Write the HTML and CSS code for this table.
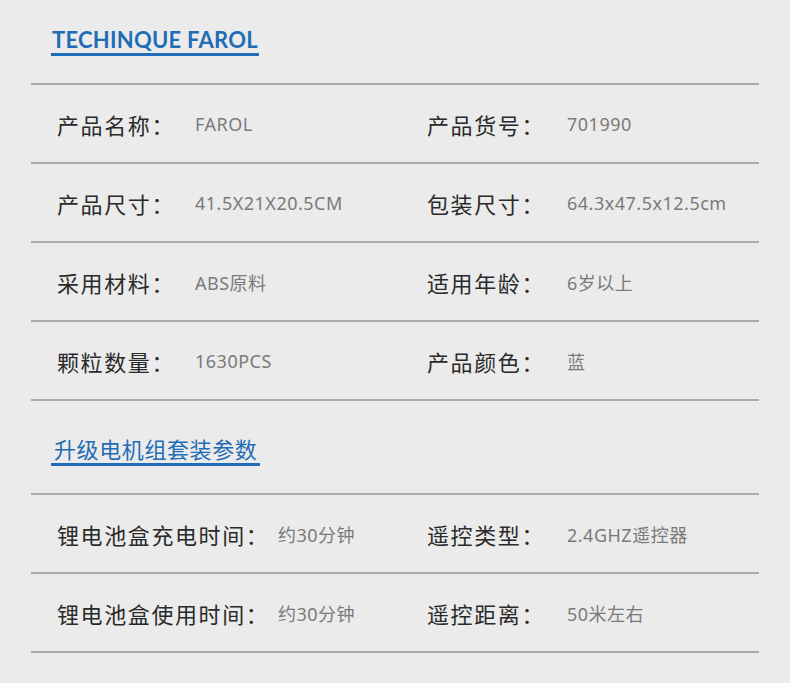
FILE: index.html
```html
<!DOCTYPE html>
<html lang="zh">
<head>
<meta charset="utf-8">
<title>TECHINQUE FAROL</title>
<link rel="stylesheet" href="styles.css">
</head>
<body>
<div class="page">
  <div class="head">
    <span class="title en">TECHINQUE FAROL</span>
  </div>
  <div class="table t1">
    <div class="row">
      <span class="label">产品名称：</span><span class="value">FAROL</span>
      <span class="label">产品货号：</span><span class="value">701990</span>
    </div>
    <div class="row">
      <span class="label">产品尺寸：</span><span class="value">41.5X21X20.5CM</span>
      <span class="label">包装尺寸：</span><span class="value">64.3x47.5x12.5cm</span>
    </div>
    <div class="row">
      <span class="label">采用材料：</span><span class="value">ABS原料</span>
      <span class="label">适用年龄：</span><span class="value">6岁以上</span>
    </div>
    <div class="row">
      <span class="label">颗粒数量：</span><span class="value">1630PCS</span>
      <span class="label">产品颜色：</span><span class="value">蓝</span>
    </div>
  </div>
  <div class="head2">
    <span class="title cn">升级电机组套装参数</span>
  </div>
  <div class="table t2">
    <div class="row">
      <span class="label">锂电池盒充电时间：</span><span class="value">约30分钟</span>
      <span class="label">遥控类型：</span><span class="value">2.4GHZ遥控器</span>
    </div>
    <div class="row">
      <span class="label">锂电池盒使用时间：</span><span class="value">约30分钟</span>
      <span class="label">遥控距离：</span><span class="value">50米左右</span>
    </div>
  </div>
</div>
</body>
</html>
```

FILE: styles.css
```css
html, body {
  margin: 0;
  padding: 0;
  background: #ebebeb;
}

.page {
  margin-left: 31px;
  width: 728px;
  height: 683px;
}

.head {
  height: 83px;
  padding-top: 29px;
  box-sizing: border-box;
}

.title {
  display: inline-block;
  color: #1f6db6;
  border-bottom: 3px solid #1f6db6;
}

.title.en {
  font-family: Lato, "Open Sans", sans-serif;
  font-weight: 700;
  font-size: 22px;
  line-height: 22px;
  margin-left: 20px;
  padding: 0 1px 2px 1px;
  letter-spacing: 0.25px;
}

.head2 {
  height: 92px;
  padding-top: 36px;
  box-sizing: border-box;
}

.title.cn {
  font-family: "Noto Sans CJK SC", sans-serif;
  font-size: 22px;
  line-height: 22px;
  letter-spacing: 0.6px;
  margin-left: 20px;
  padding: 0 3px 4px 3px;
}

.table {
  border-top: 2px solid #ababab;
}

.row {
  display: grid;
  align-items: center;
  height: 79px;
  box-sizing: border-box;
  border-bottom: 2px solid #ababab;
  padding-left: 26px;
}

.t1 .row {
  grid-template-columns: 138px 232px 140px 1fr;
}

.t2 .row {
  grid-template-columns: 221px 149px 140px 1fr;
}

.label {
  font-family: "Noto Sans CJK SC", sans-serif;
  font-size: 22px;
  letter-spacing: 1.6px;
  color: #2a2a2a;
  white-space: nowrap;
}

.value {
  font-family: "Noto Sans", "Noto Sans CJK SC", sans-serif;
  font-size: 18px;
  letter-spacing: 0.5px;
  color: #7a7a7a;
  white-space: nowrap;
}
```
